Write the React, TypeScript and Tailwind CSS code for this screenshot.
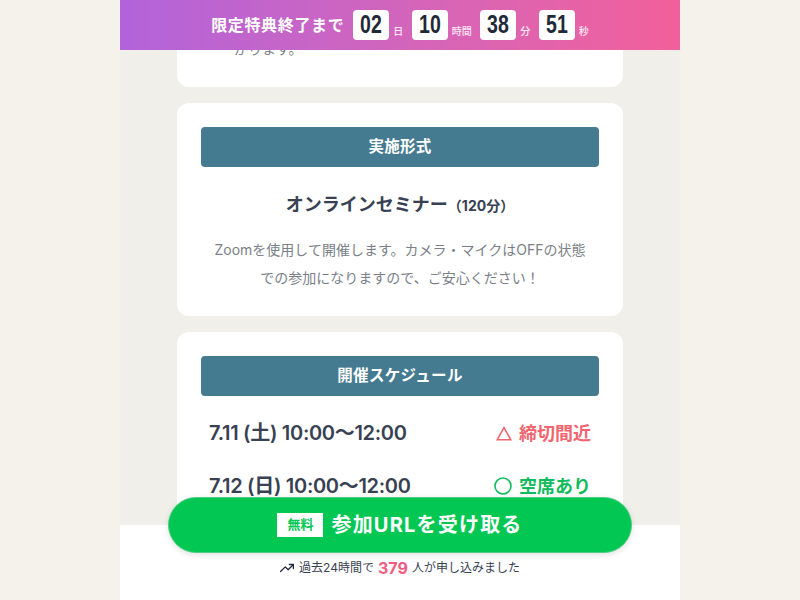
const jp = "font-['Inter','Noto_Sans_CJK_JP',sans-serif]";

const countdown = [
  { value: "02", unit: "日" },
  { value: "10", unit: "時間" },
  { value: "38", unit: "分" },
  { value: "51", unit: "秒" },
];

function SectionTitle({ children }: { children: string }) {
  return (
    <div className="flex h-10 items-center justify-center rounded-[4px] bg-[#457b90] text-[15.5px] font-bold tracking-[0.02em] text-white">
      {children}
    </div>
  );
}

export default function App() {
  return (
    <div className={`relative h-[600px] overflow-hidden bg-[#f5f2eb] ${jp}`}>
      {/* Page column */}
      <main className="mx-auto flex h-[600px] w-[560px] flex-col gap-4 bg-[#f1efea] px-[57px]">
        <section className="-mt-[33px] h-[120px] shrink-0 rounded-xl bg-white pt-[70px] pl-[57px] text-[14px] leading-6 text-[#7a7f88]">
          かります。
        </section>

        <section className="h-[213px] shrink-0 rounded-xl bg-white px-6 pt-6">
          <SectionTitle>実施形式</SectionTitle>
          <h2 className="mt-[24px] flex items-baseline justify-center text-[18px] leading-[28px] font-bold text-[#374151]">
            オンラインセミナー
            <span className="text-[14px]">（120分）</span>
          </h2>
          <p className="mt-[16px] text-center text-[14px] leading-[28px] text-[#7a7f88]">
            Zoomを使用して開催します。カメラ・マイクはOFFの状態
            <br />
            での参加になりますので、ご安心ください！
          </p>
        </section>

        <section className="h-[300px] shrink-0 rounded-xl bg-white px-6 pt-6">
          <SectionTitle>開催スケジュール</SectionTitle>
          <div className="mt-[21px] flex h-8 items-center justify-between pr-2 pl-2 text-[20px] font-semibold text-[#374151]">
            <span className="tracking-[-0.015em]">7.11 (土) 10:00～12:00</span>
            <span className="flex items-center gap-[7px] text-[18px] font-bold text-[#f0656f]">
              <svg width="16" height="15" viewBox="0 0 16 15" fill="none" stroke="currentColor" strokeWidth="1.6">
                <path d="M8 1.6 14.8 13.7H1.2Z" />
              </svg>
              締切間近
            </span>
          </div>
          <div className="mt-[21px] flex h-8 items-center justify-between pr-2 pl-2 text-[20px] font-semibold text-[#374151]">
            <span className="tracking-[-0.015em]">7.12 (日) 10:00～12:00</span>
            <span className="flex items-center gap-[7px] text-[18px] font-bold text-[#10bb5c]">
              <svg width="18" height="18" viewBox="0 0 18 18" fill="none" stroke="currentColor" strokeWidth="1.6">
                <circle cx="9" cy="9" r="8" />
              </svg>
              空席あり
            </span>
          </div>
        </section>
      </main>

      {/* Countdown bar */}
      <header className="absolute top-0 left-[120px] flex h-[50px] w-[560px] items-center justify-center bg-gradient-to-r from-[#b263da] to-[#f2609a] text-white">
        <span className="mr-[9px] text-[16px] font-bold tracking-[0.04em] whitespace-nowrap">限定特典終了まで</span>
        {countdown.map((item, i) => (
          <div key={item.unit} className="flex items-center">
            <span className="flex h-[30px] w-[36px] items-center justify-center rounded-[4px] bg-white font-['Liberation_Sans',sans-serif] text-[25px] font-bold text-[#1f2937]">
              <span className="inline-block scale-x-[0.78]">{item.value}</span>
            </span>
            <span className={`mt-[12px] ml-1 text-[10px] leading-[12px] font-medium text-white/85 ${i < 3 ? "mr-[8.5px]" : ""}`}>{item.unit}</span>
          </div>
        ))}
      </header>

      {/* Bottom CTA */}
      <div className="absolute bottom-0 left-[120px] h-[75px] w-[560px] bg-white">
        <p className="absolute top-[35px] left-0 flex w-full items-center justify-center text-[12px] leading-[16px] text-[#374151]">
          <svg className="mr-[5px]" width="14" height="14" viewBox="0 0 24 24" fill="none" stroke="#1f2937" strokeWidth="2.2" strokeLinecap="round" strokeLinejoin="round">
            <path d="M1 18 9 10l5 5 9-9" />
            <path d="M16 6h7v7" />
          </svg>
          過去24時間で
          <span className="mx-[4px] text-[16px] font-bold text-[#ed5d84]">379</span>
          人が申し込みました
        </p>
      </div>
      <button className="absolute top-[497px] left-[168px] flex h-[56px] w-[464px] items-center justify-center rounded-full border border-[#4fce83] bg-[#03c753] shadow-[0_2px_6px_rgba(0,0,0,0.12)]">
        <span className="mr-[8px] flex h-6 w-[46px] items-center justify-center bg-white text-[13px] font-bold text-[#03c753]">
          無料
        </span>
        <span className="text-[20px] font-bold tracking-[0.06em] text-white">参加URLを受け取る</span>
      </button>
    </div>
  );
}
